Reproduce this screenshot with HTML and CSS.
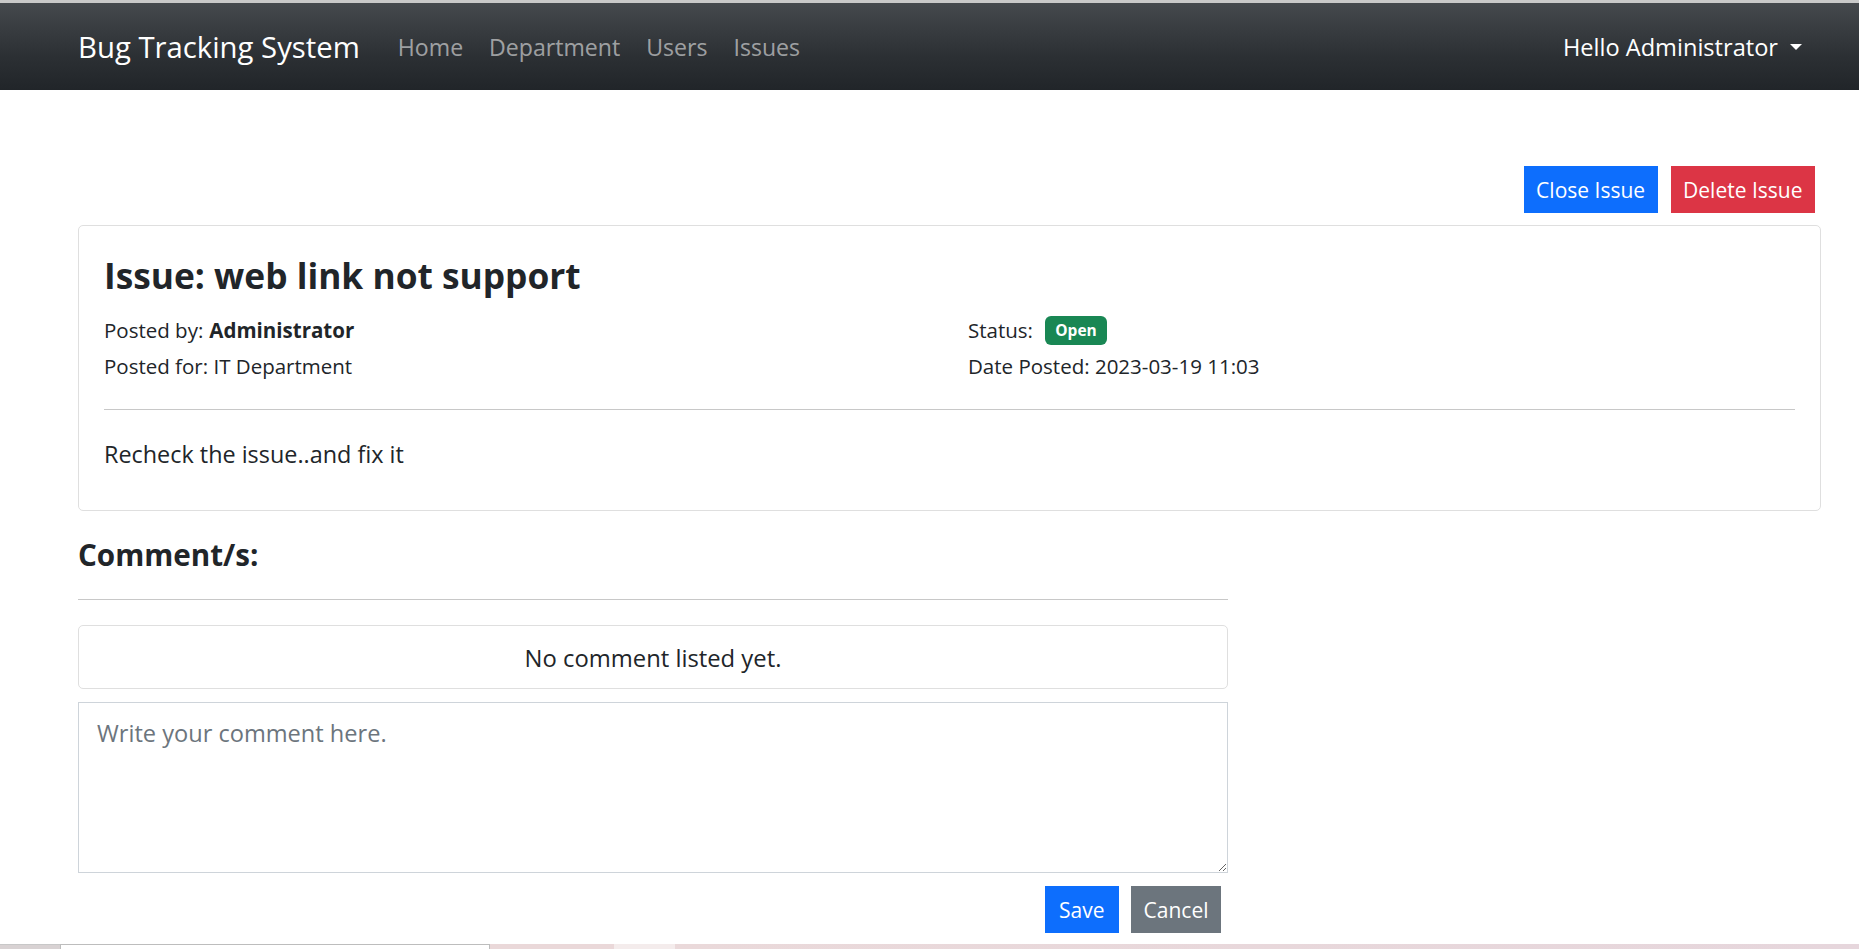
FILE: index.html
```html
<!DOCTYPE html>
<html lang="en">
<head>
<meta charset="utf-8">
<title>Bug Tracking System</title>
<link rel="stylesheet" href="styles.css">
</head>
<body>
<header class="topbar">
  <nav class="navbar">
    <a class="brand" href="#">Bug Tracking System</a>
    <ul class="nav-links">
      <li><a href="#">Home</a></li>
      <li><a href="#">Department</a></li>
      <li><a href="#">Users</a></li>
      <li><a href="#">Issues</a></li>
    </ul>
    <a class="user-menu" href="#">Hello Administrator <span class="caret"></span></a>
  </nav>
</header>
<main class="page">
  <div class="actions">
    <button class="btn btn-primary">Close Issue</button>
    <button class="btn btn-danger">Delete Issue</button>
  </div>
  <section class="card issue">
    <h3 class="issue-title">Issue: web link not support</h3>
    <div class="meta">
      <div class="meta-col">
        <p class="meta-line">Posted by: <b>Administrator</b></p>
        <p class="meta-line">Posted for: IT Department</p>
      </div>
      <div class="meta-col">
        <p class="meta-line">Status: <span class="badge">Open</span></p>
        <p class="meta-line">Date Posted: 2023-03-19 11:03</p>
      </div>
    </div>
    <hr class="rule">
    <p class="issue-body">Recheck the issue..and fix it</p>
  </section>
  <section class="comments">
    <h4 class="comments-title">Comment/s:</h4>
    <hr class="rule">
    <div class="card empty">No comment listed yet.</div>
    <textarea class="comment-input" placeholder="Write your comment here."></textarea>
    <div class="form-actions">
      <button class="btn btn-primary btn-save">Save</button>
      <button class="btn btn-secondary">Cancel</button>
    </div>
  </section>
</main>
<div class="strip">
  <span class="seg seg-a"></span>
  <span class="seg seg-b"></span>
  <span class="seg seg-c"></span>
  <span class="seg seg-d"></span>
  <span class="seg seg-e"></span>
</div>
</body>
</html>
```
FILE: styles.css
```css
* { box-sizing: border-box; }
html, body { margin: 0; padding: 0; }
body {
  font-family: "Open Sans", "Noto Sans", sans-serif;
  font-size: 20.5px;
  color: #212529;
  background: #fff;
  overflow: hidden;
}
.topbar {
  border-top: 3px solid #c9c9c9;
}
.navbar {
  height: 87px;
  display: flex;
  align-items: center;
  padding: 0 57px 0 78px;
  background: linear-gradient(180deg, #45494d 0%, #2c3034 60%, #212529 100%);
}
.brand {
  color: #fff;
  text-decoration: none;
  font-size: 29.3px;
  margin-right: 38px;
}
.nav-links {
  display: flex;
  list-style: none;
  margin: 0;
  padding: 0;
  gap: 26px;
}
.nav-links a {
  color: rgba(255,255,255,.55);
  text-decoration: none;
  font-size: 23.1px;
}
.user-menu {
  margin-left: auto;
  color: #fff;
  text-decoration: none;
  font-size: 23.6px;
  display: flex;
  align-items: center;
}
.caret {
  display: inline-block;
  margin-left: 12px;
  width: 0;
  height: 0;
  border-left: 6px solid transparent;
  border-right: 6px solid transparent;
  border-top: 6px solid #fff;
}
.page {
  padding: 76px 38px 0 78px;
}
.actions {
  display: flex;
  justify-content: flex-end;
  gap: 13px;
  padding-right: 6px;
  margin-bottom: 12px;
}
.btn {
  font-family: inherit;
  font-size: 21px;
  height: 47px;
  padding: 0 12.5px;
  border: none;
  border-radius: 0;
  color: #fff;
  cursor: pointer;
}
.btn-save { padding: 0 14.5px; }
.btn-primary { background: #0d6efd; }
.btn-danger { background: #dc3545; }
.btn-secondary { background: #6c757d; }
.card {
  border: 1px solid #dfdfdf;
  border-radius: 5px;
  background: #fff;
}
.issue {
  padding: 28px 25px 41px 25px;
}
.issue-title {
  margin: 0 0 19px 0;
  font-size: 35.3px;
  font-weight: 700;
  line-height: 42px;
}
.meta {
  display: grid;
  grid-template-columns: 1fr 1fr;
  column-gap: 37px;
}
.meta-line {
  margin: 0 0 6px 0;
  line-height: 30px;
  display: flex;
  align-items: center;
}
.meta-line b { margin-left: 6px; font-weight: 700; }
.badge {
  display: inline-flex;
  align-items: center;
  justify-content: center;
  margin-left: 12px;
  width: 62px;
  height: 29px;
  border-radius: 6px;
  background: #198754;
  color: #fff;
  font-size: 15.5px;
  font-weight: 700;
}
.rule {
  border: none;
  border-top: 1px solid #c8c8c8;
  margin: 22px 0 29px 0;
}
.issue-body {
  margin: 0;
  font-size: 23.4px;
  line-height: 30px;
}
.comments {
  width: 1150px;
  padding-top: 26px;
}
.comments-title {
  margin: 0;
  font-size: 29.6px;
  font-weight: 700;
  line-height: 36px;
}
.comments .rule {
  margin: 26px 0 25px 0;
}
.empty {
  height: 64px;
  display: flex;
  align-items: center;
  justify-content: center;
  padding-top: 2px;
  font-size: 23.8px;
}
.comment-input {
  display: block;
  width: 100%;
  height: 171px;
  margin-top: 13px;
  padding: 15px 18px;
  border: 1px solid #ced4da;
  border-radius: 0;
  font-family: inherit;
  font-size: 23.6px;
  line-height: 30px;
  color: #212529;
  resize: vertical;
}
.comment-input::placeholder { color: #6c757d; }
.form-actions {
  display: flex;
  justify-content: flex-end;
  gap: 12px;
  margin-top: 13px;
  padding-right: 7px;
}
.strip {
  display: flex;
  height: 5px;
  margin-top: 11px;
}
.seg { display: block; height: 5px; }
.seg-a { width: 60px; background: #d8d2d3; border-top: 1px solid #c8c8c8; }
.seg-b { width: 430px; background: #fff; border-top: 1px solid #bdbdbd; border-left: 1px solid #bdbdbd; border-right: 1px solid #bdbdbd; }
.seg-c { width: 124px; background: #ead8d9; }
.seg-d { width: 61px; background: #f4ecec; }
.seg-e { flex: 1; background: linear-gradient(90deg, #ead9da, #e6d6dc); }
```
